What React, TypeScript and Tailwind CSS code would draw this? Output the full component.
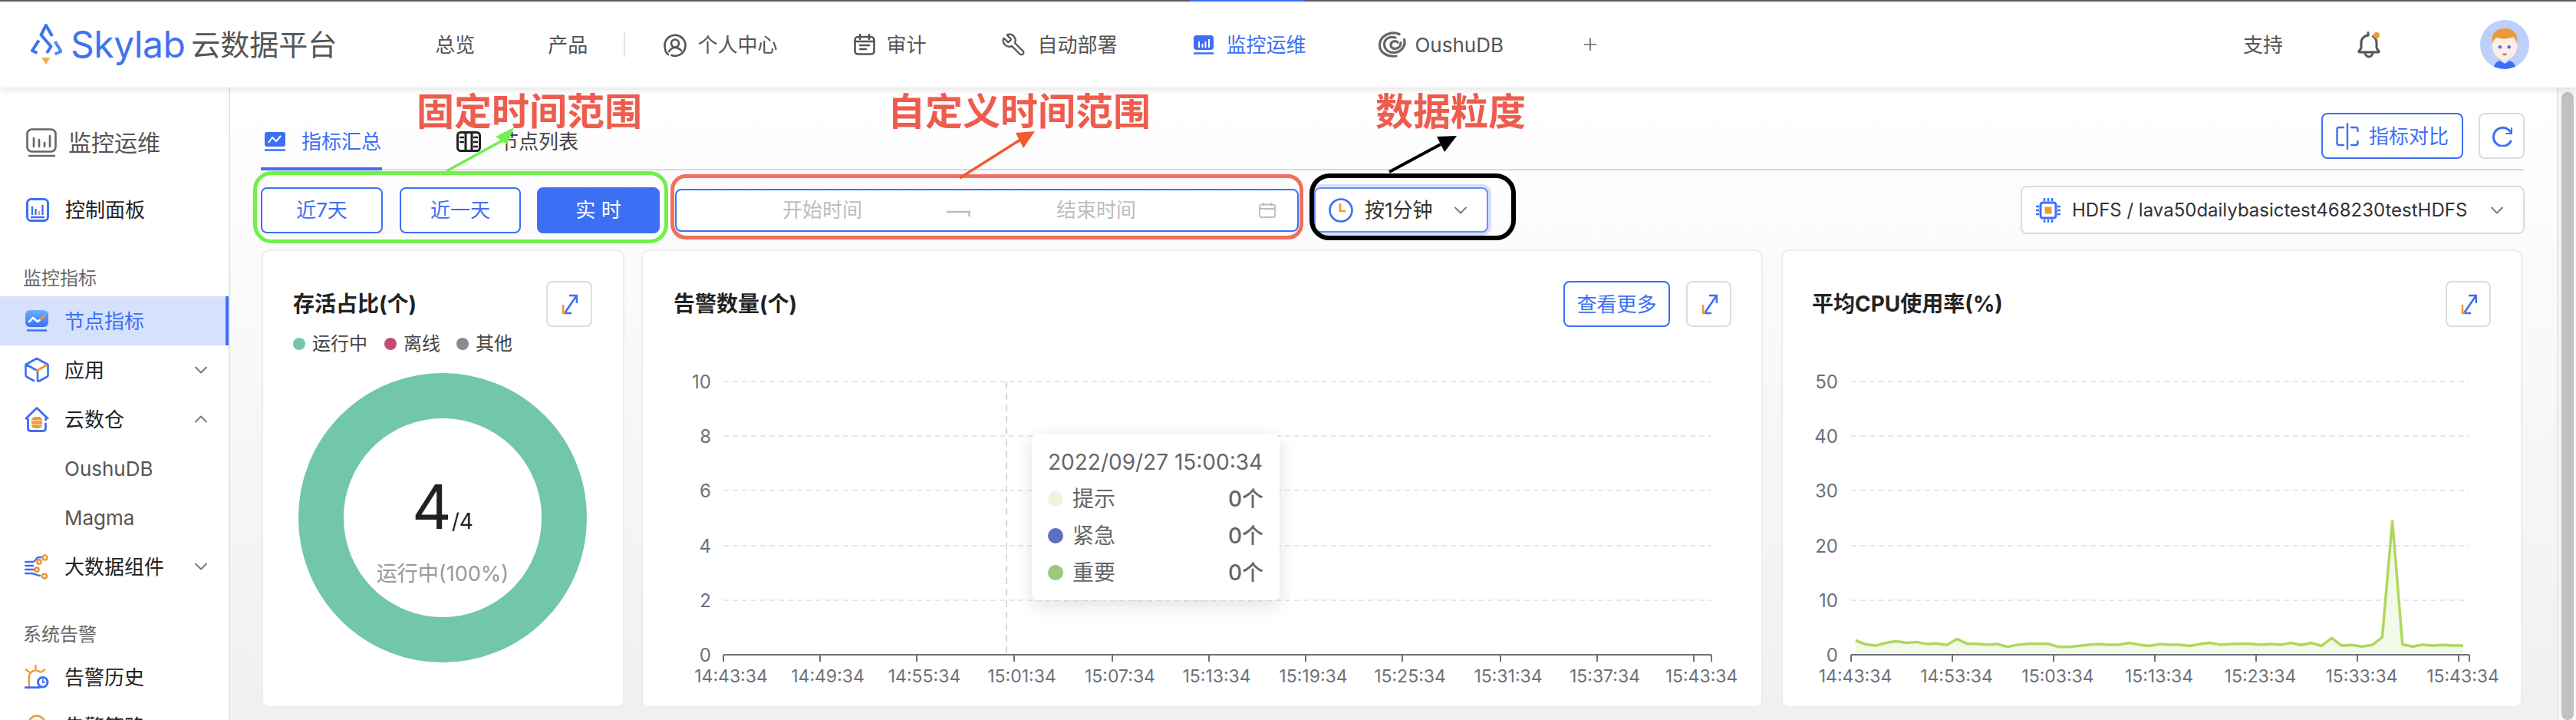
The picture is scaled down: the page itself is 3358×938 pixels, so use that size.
import React from 'react';
import { Wrench, Plus, ChevronDown, ChevronUp } from 'lucide-react';

const cpu = [1305,1318,1322,1313,1307,1313,1310,1317,1315,1320,1300,1316,1316,1319,1317,1326,1319,1316,1316,1316,1326,1326,1323,1319,1317,1319,1319,1313,1319,1323,1317,1319,1319,1323,1317,1313,1319,1317,1316,1316,1319,1317,1319,1313,1320,1313,1323,1297,1322,1320,1325,1320,1295,910,1318,1325,1319,1322,1320,1322,1322];
const cpuPts = cpu.map((z, i) => `${(2419 + i * 13.2).toFixed(1)},${(320 + z / 2.537).toFixed(1)}`);
const gridY = [497, 568, 639, 711, 782];

const LogoMark = () => (
  <svg width="41" height="54" viewBox="0 0 41 54" fill="none" stroke="#3f72f0" strokeWidth="4" strokeLinejoin="round">
    <path d="M28 16 20 2 13.5 14.5 26.5 29.5 21 38" />
    <path d="M10.7 21.5 2 35 8.5 38" />
    <path d="M31.7 23 39.5 36 31.7 39.5" stroke="#4f8df5" />
    <path d="M14 44h11.5L20 53z" fill="#eeb25e" stroke="none" />
  </svg>
);

const UserIcon = () => (
  <svg width="30" height="31" viewBox="0 0 30 31" fill="none" stroke="#555" strokeWidth="2.6" strokeLinecap="round">
    <path d="M6 28C2.500 25.500 1.500 21 1.500 16a13.500 13.500 0 1 1 9 13" />
    <circle cx="15" cy="13.500" r="5" />
    <path d="M7 24c2-3 5-5 8-5s6 1.500 8 4" />
  </svg>
);

const AuditIcon = () => (
  <svg width="28" height="28" viewBox="0 0 28 28" fill="none" stroke="#555" strokeWidth="2.6" strokeLinecap="round">
    <rect x="1.500" y="4" width="25" height="22.500" rx="4" />
    <path d="M8 1v6M20 1v6M1.500 10h25M8 15h12M8 20h8" />
  </svg>
);

const MonitorFill = () => (
  <svg width="28" height="25" viewBox="0 0 28 25" fill="none">
    <rect x="1" y="0" width="26" height="19" rx="4" fill="#3d6ff5" />
    <path d="M8 8v8M12.500 11v5M16.500 8v8M21 5v11" stroke="#fff" strokeWidth="2" />
    <path d="M1 23.500h26" stroke="#3d6ff5" strokeWidth="2.500" />
  </svg>
);

const OushuIcon = () => (
  <svg width="38" height="34" viewBox="0 0 38 34" fill="none" stroke="#666" strokeWidth="3.200" strokeLinecap="round">
    <path d="M28 3.500C18 -1 3 5 2.500 17 2 28 13 33.500 24 32" />
    <path d="M34.500 10.500C37 19 30 28 20 27.500 12 27 8 21 8.500 16 9 9 16 6 23 8" />
    <path d="M26 14c-3-3-9-1-9 3.500s5 6 9 4c3-1.500 4-4 4-7" />
  </svg>
);

const Bell = () => (
  <svg width="34" height="36" viewBox="0 0 34 36" fill="none" stroke="#555" strokeWidth="3" strokeLinecap="round">
    <path d="M15 2.500V6C9 7 6 11 6 16v6c0 2-2 3-3 4.500-.5 1 .5 1.500 1 1.500h24c1 0 1.500-1 1-1.500C28 25 26 24 26 22v-6c0-4-1.500-7-4.500-8.500" />
    <path d="M11 28c0 4 3 6 5 6s5-2 5-6" />
    <circle cx="26" cy="6" r="4" fill="#ec9a3a" stroke="none" />
  </svg>
);

const Avatar = () => (
  <svg width="64" height="64" viewBox="0 0 64 64">
    <clipPath id="avatar-clip"><circle cx="32" cy="32" r="32" /></clipPath>
    <g clipPath="url(#avatar-clip)">
      <rect width="64" height="64" fill="#bcd0fb" />
      <circle cx="16.700" cy="34" r="3" fill="#f0d6c8" />
      <circle cx="47" cy="34" r="3" fill="#f0d6c8" />
      <path d="M18 60c2-5 7-8 14-8s12 3 14 8v4H18z" fill="#3d6ff5" />
      <path d="M26 53l6 4 6-4-2-3h-8z" fill="#d9e4fa" />
      <ellipse cx="32" cy="35" rx="16" ry="17" fill="#fbeee8" />
      <path d="M15.700 29C14 18 21 11 32 11s18 7 16 18c-2-3-3-5-4-7-7 3-17 3-23 1-2 2-4 4-5.300 6z" fill="#ec9a3a" />
      <circle cx="26" cy="35.300" r="2.200" fill="#3d6ff5" />
      <circle cx="37.700" cy="35.300" r="2.200" fill="#3d6ff5" />
      <path d="M29 43.500h6c0 2-1 3-3 3s-3-1-3-3z" fill="#c9847a" />
    </g>
  </svg>
);

const MonitorOutline = () => (
  <svg width="40" height="38" viewBox="0 0 40 38" fill="none" stroke="#666" strokeWidth="2.600" strokeLinecap="round">
    <rect x="1.500" y="1.500" width="37" height="29" rx="6" />
    <path d="M10 13v11M17 15v9M24 19v5M31 10v14" />
    <path d="M4 36h33" strokeWidth="2.400" />
  </svg>
);

const PanelIcon = () => (
  <svg width="30" height="31" viewBox="0 0 30 31" fill="none" strokeWidth="2.400">
    <rect x="1.500" y="1.500" width="27" height="28" rx="5" stroke="#3d6ff5" strokeWidth="3" />
    <path d="M8 11v11M12.500 14v8M21.500 9v13M6 25h18" stroke="#3d6ff5" />
    <path d="M17 17v5" stroke="#ec9a3a" />
  </svg>
);

const NodeIcon = () => (
  <svg width="32" height="28" viewBox="0 0 32 28" fill="none">
    <defs>
      <linearGradient id="node-grad" x1="0" y1="0" x2="0" y2="1">
        <stop offset="0" stopColor="#6fb0fb" />
        <stop offset="1" stopColor="#3d6ff5" />
      </linearGradient>
    </defs>
    <rect x="1" y="0" width="30" height="22" rx="6" fill="url(#node-grad)" />
    <path d="M6 15l5-5 6 5 4-3" stroke="#fff" strokeWidth="2.600" strokeLinecap="round" strokeLinejoin="round" />
    <path d="M21 12l5-5" stroke="#ec9a3a" strokeWidth="2.600" strokeLinecap="round" />
    <path d="M3 26.500h26" stroke="#3d6ff5" strokeWidth="2.400" />
  </svg>
);

const BoxIcon = () => (
  <svg width="32" height="34" viewBox="0 0 32 34" fill="none" strokeWidth="2.600" strokeLinecap="round" strokeLinejoin="round">
    <path d="M12 31l-9-5c-1-.5-1.500-1-1.500-2V10L16 2l14.500 8v14c0 1-.5 1.500-1.500 2l-9 5c-1 .5-2 .5-3 0V18L2 10" stroke="#3d6ff5" />
    <path d="M16 18l12-7" stroke="#ec9a3a" strokeWidth="3" />
  </svg>
);

const HouseIcon = () => (
  <svg width="32" height="33" viewBox="0 0 32 33" fill="none" strokeWidth="2.800" strokeLinecap="round" strokeLinejoin="round">
    <path d="M30 15L16 1.500 2 15l2.500 1v12c0 2.500 1.500 3.500 3.500 3.500h16c2 0 3.500-1 3.500-3.500v-6M27.500 16v1" stroke="#3d6ff5" />
    <rect x="9" y="13" width="14" height="15" rx="5" fill="#ec9a3a" />
    <path d="M9.500 18h13M9.500 23h13" stroke="#f9d7a8" strokeWidth="1.400" />
  </svg>
);

const DataIcon = () => (
  <svg width="32" height="33" viewBox="0 0 32 33" fill="none" strokeWidth="2.400" strokeLinecap="round">
    <path d="M1 10h10c4 0 3-6 8-6h4M1 15h10M1 20h11M1 25h8c5 0 7 3 11 3" stroke="#3d6ff5" />
    <g stroke="#ec9a3a" strokeWidth="2.600">
      <circle cx="26.500" cy="4.500" r="3" />
      <circle cx="19" cy="10" r="2.600" />
      <circle cx="16" cy="20" r="2.600" />
      <circle cx="26" cy="28.500" r="3" />
    </g>
  </svg>
);

const AlarmIcon = () => (
  <svg width="33" height="32" viewBox="0 0 33 32" fill="none" strokeWidth="2.400" strokeLinecap="round">
    <path d="M6 28V16a9 9 0 0 1 15-6.500M15 0v5M2 6l4 3M27 6l-4 3" stroke="#ec9a3a" />
    <path d="M1 30h20" stroke="#3d6ff5" strokeWidth="2.800" />
    <circle cx="24.500" cy="23" r="6.500" fill="#fff" stroke="#3d6ff5" strokeWidth="3" />
    <path d="M24.500 19.500V23h3" stroke="#3d6ff5" strokeWidth="1.800" />
  </svg>
);

const PolicyIcon = () => (
  <svg width="24" height="32" viewBox="0 0 24 32" fill="none">
    <circle cx="12" cy="13" r="10.500" stroke="#ec9a3a" strokeWidth="2.600" />
  </svg>
);

const TabFillIcon = () => (
  <svg width="29" height="25" viewBox="0 0 29 25" fill="none">
    <rect x="1" y="0" width="27" height="19" rx="3" fill="#3d6ff5" />
    <path d="M6 14l5-7 5 5 6-7" stroke="#fff" strokeWidth="2" strokeLinejoin="round" />
    <path d="M1 23.500h27" stroke="#3d6ff5" strokeWidth="2.500" />
  </svg>
);

const TabListIcon = () => (
  <svg width="32" height="27" viewBox="0 0 32 27" fill="none" stroke="#222" strokeWidth="3">
    <rect x="1.500" y="1.500" width="29" height="24" rx="4" />
    <path d="M12 1.500v24M20 1.500v24" />
    <path d="M4 8h6M4 14h6M22 8h6M22 14h6M22 20h6" strokeWidth="2.400" />
  </svg>
);

const ExpandIcon = () => (
  <svg width="22" height="27" viewBox="0 0 22 27" fill="none" strokeWidth="2.600">
    <path d="M5 25L20 3M11 2h10v10M5 25h9" stroke="#3d6ff5" />
    <path d="M3 14v11h3" stroke="#ec9a3a" />
  </svg>
);

const ExpandButton = ({ wide }: { wide?: boolean }) => (
  <button className={`flex h-[60px] shrink-0 items-center justify-center rounded-[8px] border-2 border-[#dcdce0] bg-white ${wide ? 'w-[60px]' : 'w-[59px]'}`}>
    <ExpandIcon />
  </button>
);

const CompareIcon = () => (
  <svg width="30" height="35" viewBox="0 0 30 35" fill="none" stroke="#3d6ff5" strokeWidth="2.400" strokeLinecap="round">
    <path d="M15 1v33" />
    <path d="M10 6H4C2.500 6 1.500 7 1.500 8.500v18C1.500 28 2.500 29 4 29h6" />
    <path d="M20 6h6c1.500 0 2.500 1 2.500 2.500V11M28.500 24v2.500c0 1.500-1 2.500-2.500 2.500h-6" />
  </svg>
);

const RefreshIcon = () => (
  <svg width="28" height="27" viewBox="0 0 28 27" fill="none" stroke="#3d6ff5" strokeWidth="3" strokeLinecap="round">
    <path d="M26 20a12 12 0 1 1-3-15l3 3" />
    <path d="M27 3v7h-7" strokeWidth="2" />
  </svg>
);

const ChipIcon = () => (
  <svg width="32" height="32" viewBox="0 0 32 32" fill="none" stroke="#3d6ff5">
    <rect x="6" y="6" width="20" height="20" rx="3" strokeWidth="3" />
    <rect x="11.500" y="11.500" width="9" height="9" fill="#ec9a3a" stroke="none" />
    <path d="M11 0v4M16 0v4M21 0v4M11 28v4M16 28v4M21 28v4M0 11h4M0 16h4M0 21h4M28 11h4M28 16h4M28 21h4" strokeWidth="2.400" />
  </svg>
);

const ClockIcon = () => (
  <svg width="32" height="32" viewBox="0 0 32 32" fill="none">
    <circle cx="16" cy="16" r="14.500" stroke="#3d6ff5" strokeWidth="2.600" />
    <path d="M15 7v10h7" stroke="#ec9a3a" strokeWidth="2.600" />
  </svg>
);

const CalendarIcon = () => (
  <svg width="22" height="20" viewBox="0 0 22 20" fill="none" stroke="#bdbdbd" strokeWidth="1.800">
    <rect x="1" y="2.500" width="20" height="16.500" rx="2" />
    <path d="M1 8h20M6 0v4M16 0v4" />
  </svg>
);

const NavItem = ({ icon, label, className, active }: { icon?: React.ReactNode; label: string; className?: string; active?: boolean }) => (
  <div className={`relative flex items-center text-[26px] ${active ? 'text-[#3d6ff5]' : 'text-[#555]'} ${className ?? ''}`}>
    {icon}
    <span>{label}</span>
  </div>
);

const SideRow = ({
  icon,
  label,
  open,
  active,
  sub,
  cls,
}: {
  icon?: React.ReactNode;
  label: string;
  open?: boolean;
  active?: boolean;
  sub?: boolean;
  cls?: string;
}) => (
  <div
    className={`flex h-[64px] shrink-0 items-center pl-[32px] text-[26px] ${
      active ? 'border-r-4 border-[#3d6ff5] bg-[#d6e2fc] text-[#3d6ff5]' : sub ? 'text-[#555]' : 'text-[#222]'
    } ${cls ?? ''}`}
  >
    <span className="flex w-[32px] shrink-0 justify-center">{icon}</span>
    <span className="ml-[20px]">{label}</span>
    {open === true && <ChevronUp className="ml-auto mr-[22px] text-[#777]" size={28} strokeWidth={1.600} />}
    {open === false && <ChevronDown className="ml-auto mr-[22px] text-[#777]" size={28} strokeWidth={1.600} />}
  </div>
);

const FilterButton = ({ label, solid, className }: { label: string; solid?: boolean; className: string }) => (
  <button
    className={`flex h-[60px] items-center justify-center rounded-[8px] border-2 border-[#3d6ff5] text-[26px] ${
      solid ? 'bg-[#3d6ff5] text-white' : 'bg-white text-[#3d6ff5]'
    } ${className}`}
  >
    {label}
  </button>
);

const Legend = ({ color, label, className }: { color: string; label: string; className?: string }) => (
  <div className={`flex items-center text-[24px] text-[#444] ${className ?? ''}`}>
    <span className={`h-[16px] w-[16px] rounded-full ${color}`} />
    <span className="ml-[9px]">{label}</span>
  </div>
);

const Chart = ({
  x,
  w,
  yLabels,
  yRight,
  axis,
  ticks,
  labels,
  offset,
  children,
}: {
  x: number;
  w: number;
  yLabels: string[];
  yRight: number;
  axis: [number, number];
  ticks: number[];
  labels: string[];
  offset: number;
  children?: React.ReactNode;
}) => (
  <svg className="block" width={w} height={430} viewBox={`${x} 480 ${w} 430`} fill="none">
    {gridY.map((y) => (
      <path key={y} d={`M${axis[0]} ${y}H${axis[1]}`} stroke="#e2e7f3" strokeWidth="2" strokeDasharray="7 5" />
    ))}
    {children}
    <path d={`M${axis[0]} 853H${axis[1]}`} stroke="#6e7079" strokeWidth="2" />
    {ticks.map((t) => (
      <path key={t} d={`M${t} 853v9`} stroke="#6e7079" strokeWidth="2" />
    ))}
    {yLabels.map((l, i) => (
      <text key={l} x={yRight} y={[497, 568, 639, 711, 782, 853][i]} dy="9" textAnchor="end" fontSize="24" fill="#6e7079">
        {l}
      </text>
    ))}
    {labels.map((l, i) => (
      <text key={l} x={ticks[i] + offset} y="889" textAnchor="middle" fontSize="23" fill="#6e7079">
        {l}
      </text>
    ))}
  </svg>
);

const TipRow = ({ color, label }: { color: string; label: string }) => (
  <div className="flex h-[48px] items-center text-[28px] text-[#666]">
    <span className={`h-[20px] w-[20px] rounded-full ${color}`} />
    <span className="ml-[12px]">{label}</span>
    <span className="ml-auto font-medium">0个</span>
  </div>
);

const Arrow = ({ from, to, head, color, width }: { from: string; to: string; head: string; color: string; width: number }) => (
  <g>
    <path d={`M${from}L${to}`} stroke={color} strokeWidth={width} />
    <polygon points={head} fill={color} />
  </g>
);

export default function App() {
  return (
    <div className="relative h-[938px] w-[3358px] overflow-hidden bg-white font-[family-name:Inter,'Noto_Sans_CJK_SC',sans-serif]">
      {/* top nav */}
      <header className="relative z-10 flex h-[114px] items-center border-t-2 border-[#5c5c5c] bg-white shadow-[0_2px_10px_rgba(0,0,0,0.12)]">
        <div className="ml-[40px] flex items-center">
          <LogoMark />
          <span className="ml-[11px] text-[48px] leading-none tracking-[-0.5px] text-[#3f72f0]">Skylab</span>
          <span className="ml-[8px] text-[38px] leading-none text-[#555]">云数据平台</span>
        </div>
        <NavItem label="总览" className="ml-[128px]" />
        <NavItem label="产品" className="ml-[95px]" />
        <div className="ml-[47px] h-[32px] w-[2px] bg-[#e2e2e2]" />
        <NavItem icon={<UserIcon />} label="个人中心" className="ml-[50px] gap-[14px]" />
        <NavItem icon={<AuditIcon />} label="审计" className="ml-[100px] gap-[14px]" />
        <NavItem icon={<Wrench size={32} strokeWidth={1.700} className="-scale-x-100" />} label="自动部署" className="ml-[98px] gap-[15px]" />
        <NavItem
          active
          icon={
            <>
              <span className="absolute left-[-4px] top-[-43px] h-[6px] w-[150px] bg-[#3d6ff5]" />
              <MonitorFill />
            </>
          }
          label="监控运维"
          className="ml-[99px] gap-[15px]"
        />
        <NavItem icon={<OushuIcon />} label="OushuDB" className="ml-[94px] gap-[10px]" />
        <Plus className="ml-[100px] text-[#666]" size={26} strokeWidth={1.500} />
        <NavItem label="支持" className="ml-[838px]" />
        <div className="ml-[96px]">
          <Bell />
        </div>
        <div className="ml-[127px]">
          <Avatar />
        </div>
      </header>

      <div className="flex h-[824px]">
        {/* side menu */}
        <aside className="flex w-[300px] shrink-0 flex-col border-r-2 border-[#e4e4e8] bg-white pt-[40px]">
          <div className="flex h-[64px] shrink-0 items-center pl-[34px] text-[30px] text-[#555]">
            <MonitorOutline />
            <span className="ml-[15px]">监控运维</span>
          </div>
          <SideRow icon={<PanelIcon />} label="控制面板" cls="mt-[23px] !pl-[33px]" />
          <div className="ml-[30px] mt-[40px] mb-[5px] h-[36px] text-[24px] leading-[36px] text-[#666]">监控指标</div>
          <SideRow active icon={<NodeIcon />} label="节点指标" />
          <SideRow icon={<BoxIcon />} label="应用" open={false} />
          <SideRow icon={<HouseIcon />} label="云数仓" open />
          <SideRow sub label="OushuDB" />
          <SideRow sub label="Magma" />
          <SideRow icon={<DataIcon />} label="大数据组件" open={false} />
          <div className="ml-[30px] mt-[39px] mb-[5px] h-[36px] shrink-0 text-[24px] leading-[36px] text-[#666]">系统告警</div>
          <SideRow icon={<AlarmIcon />} label="告警历史" />
          <SideRow icon={<PolicyIcon />} label="告警策略" />
        </aside>

        {/* main */}
        <main className="flex w-[3033px] shrink-0 flex-col bg-gradient-to-b from-white to-[#f0f0f0] pl-[40px] pr-[42px]">
          <div className="flex h-[108px] shrink-0 border-b-2 border-[#d9d9e0]">
            <div className="flex h-[108px] w-[158px] items-start gap-[20px] border-b-4 border-[#3d6ff5] pl-[4px] pt-[58px] text-[26px] leading-[26px] text-[#3d6ff5]">
              <TabFillIcon />
              <span>指标汇总</span>
            </div>
            <div className="ml-[97px] flex items-start gap-[23px] pt-[57px] text-[26px] leading-[28px] text-[#444]">
              <TabListIcon />
              <span>节点列表</span>
            </div>
            <div className="ml-auto flex gap-[20px] pt-[33px]">
              <button className="flex h-[60px] w-[185px] items-center justify-center gap-[13px] rounded-[8px] border-2 border-[#3d6ff5] bg-white text-[26px] text-[#3d6ff5]">
                <CompareIcon />
                <span>指标对比</span>
              </button>
              <button className="flex h-[60px] w-[60px] items-center justify-center rounded-[8px] border-2 border-[#dcdce0] bg-white">
                <RefreshIcon />
              </button>
            </div>
          </div>

          <div className="flex h-[103px] shrink-0 items-center">
            <FilterButton label="近7天" className="w-[159px]" />
            <FilterButton label="近一天" className="ml-[22px] w-[158px]" />
            <FilterButton solid label="实 时" className="ml-[21px] w-[160px]" />
            <div className="ml-[20px] flex h-[56px] w-[813px] items-center rounded-[8px] border-2 border-[#3d6ff5] bg-white text-[26px] text-[#bdbdbd]">
              <span className="ml-[138px]">开始时间</span>
              <svg className="ml-[110px] mt-[8px]" width="32" height="10" viewBox="0 0 32 10" fill="none" stroke="#bdbdbd" strokeWidth="2.400">
                <path d="M0 3h30l-1 6" />
              </svg>
              <span className="ml-[111px]">结束时间</span>
              <span className="ml-[160px]">
                <CalendarIcon />
              </span>
            </div>
            <div className="ml-[20px] flex h-[59px] w-[227px] items-center rounded-[8px] border-2 border-[#6690f5] bg-white pl-[17px] text-[26px] text-[#333] shadow-[0_0_0_4px_#d6e0fb]">
              <ClockIcon />
              <span className="ml-[15px]">按1分钟</span>
              <ChevronDown className="ml-auto mr-[20px] text-[#777]" size={28} strokeWidth={1.600} />
            </div>
            <div className="ml-auto flex h-[63px] w-[657px] items-center rounded-[8px] border-2 border-[#dcdce0] bg-white pl-[18px] text-[24px] text-[#333]">
              <ChipIcon />
              <span className="ml-[15px] whitespace-nowrap">HDFS / lava50dailybasictest468230testHDFS</span>
              <ChevronDown className="ml-auto mr-[20px] text-[#777]" size={28} strokeWidth={1.600} />
            </div>
          </div>

          <div className="flex h-[597px] shrink-0 pl-[1px]">
            <section className="flex w-[473px] shrink-0 flex-col rounded-[10px] border-2 border-[#ededed] bg-white pl-[39px] pr-[40px] pt-[39px]">
              <div className="flex h-[60px] items-center justify-between">
                <h3 className="text-[28px] font-bold text-[#222]">存活占比(个)</h3>
                <ExpandButton wide />
              </div>
              <div className="mt-[10px] flex h-[24px]">
                <Legend color="bg-[#72c6ac]" label="运行中" />
                <Legend color="bg-[#c64b70]" label="离线" className="ml-[22px]" />
                <Legend color="bg-[#8a8b90]" label="其他" className="ml-[21px]" />
              </div>
              <div className="-mx-[10px] mt-[26px] flex justify-center">
                <div className="flex h-[377px] w-[376px] flex-col items-center rounded-full border-[59px] border-[#72c6ac] pt-[70px]">
                  <div className="flex items-baseline text-[#222]">
                    <span className="text-[80px] leading-[90px]">4</span>
                    <span className="text-[28px]">/4</span>
                  </div>
                  <span className="mt-[25px] text-[27px] leading-[36px] text-[#999]">运行中(100%)</span>
                </div>
              </div>
            </section>

            <section className="relative ml-[22px] flex w-[1462px] shrink-0 flex-col rounded-[10px] border-2 border-[#ededed] bg-white pt-[39px]">
              <div className="flex h-[60px] items-center pl-[40px] pr-[39px]">
                <h3 className="text-[28px] font-bold text-[#222]">告警数量(个)</h3>
                <button className="ml-auto mr-[21px] flex h-[60px] w-[139px] items-center justify-center rounded-[8px] border-2 border-[#3d6ff5] bg-white text-[26px] text-[#3d6ff5]">
                  查看更多
                </button>
                <ExpandButton />
              </div>
              <div className="mt-[54px]">
                <Chart
                  x={838}
                  w={1458}
                  yLabels={['10', '8', '6', '4', '2', '0']}
                  yRight={927}
                  axis={[943, 2231]}
                  ticks={[943, 1069, 1195, 1322, 1450, 1576, 1702, 1828, 1956, 2082, 2208, 2231]}
                  labels={['14:43:34', '14:49:34', '14:55:34', '15:01:34', '15:07:34', '15:13:34', '15:19:34', '15:25:34', '15:31:34', '15:37:34', '15:43:34']}
                  offset={10}
                >
                  <path d="M1312 497V853" stroke="#c9c9cf" strokeWidth="1.500" strokeDasharray="9 6" />
                </Chart>
              </div>
              {/* hover tooltip on the chart */}
              <div className="absolute left-[507px] top-[239px] h-[216px] w-[323px] rounded-[8px] bg-white px-[21px] pt-[18px] shadow-[0_6px_24px_rgba(0,0,0,0.13)]">
                <div className="mb-[6px] h-[36px] whitespace-nowrap text-[28px] leading-[36px] text-[#666]">2022/09/27 15:00:34</div>
                <TipRow color="bg-[#f3f3dd]" label="提示" />
                <TipRow color="bg-[#5a70c3]" label="紧急" />
                <TipRow color="bg-[#9bc879]" label="重要" />
              </div>
            </section>

            <section className="ml-[24px] flex w-[966px] shrink-0 flex-col rounded-[10px] border-2 border-[#ededed] bg-white pt-[39px]">
              <div className="flex h-[60px] items-center pl-[38px] pr-[39px]">
                <h3 className="text-[28px] font-bold text-[#222]">平均CPU使用率(%)</h3>
                <div className="ml-auto">
                  <ExpandButton />
                </div>
              </div>
              <div className="mt-[54px]">
                <Chart
                  x={2324}
                  w={962}
                  yLabels={['50', '40', '30', '20', '10', '0']}
                  yRight={2396}
                  axis={[2413, 3219]}
                  ticks={[2413, 2545, 2677, 2809, 2941, 3073, 3205, 3219]}
                  labels={['14:43:34', '14:53:34', '15:03:34', '15:13:34', '15:23:34', '15:33:34', '15:43:34']}
                  offset={5.5}
                >
                  <polygon points={`2419,853 ${cpuPts.join(' ')} 3211,853`} fill="#f3f9e8" />
                  <polyline points={cpuPts.join(' ')} stroke="#afd75e" strokeWidth="3.500" strokeLinejoin="round" />
                </Chart>
              </div>
            </section>
          </div>
        </main>

        {/* scrollbar */}
        <div className="flex-1 border-l-2 border-[#e6e6e6] bg-[#f7f7f7] pl-[4px] pt-[6px]">
          <div className="h-full w-[16px] rounded-full bg-[#c1c1c1]" />
        </div>
      </div>

      {/* red/green/black notes drawn on top of the screenshot */}
      <div className="absolute left-[330px] top-[223px] z-20 h-[94px] w-[541px] rounded-[24px] border-[5px] border-[#70f04a]" />
      <div className="absolute left-[874px] top-[227px] z-20 h-[85px] w-[825px] rounded-[20px] border-[5px] border-[#f0705c]" />
      <div className="absolute left-[1707px] top-[226px] z-20 h-[87px] w-[269px] rounded-[26px] border-[6px] border-black" />
      <span className="absolute left-[543px] top-[116px] z-20 text-[49px] font-bold leading-[60px] text-[#ee5c4e]">固定时间范围</span>
      <span className="absolute left-[1157px] top-[116px] z-20 text-[49px] font-bold leading-[60px] text-[#ee5c4e]">自定义时间范围</span>
      <span className="absolute left-[1793px] top-[116px] z-20 text-[49px] font-bold leading-[60px] text-[#ee5c4e]">数据粒度</span>
      <svg className="absolute left-0 top-0 z-20" width="3358" height="320" viewBox="0 0 3358 320" fill="none">
        <Arrow from="582,223" to="655,183" head="670,166 646,178 661,188" color="#70f04a" width={3.500} />
        <Arrow from="1251,232" to="1330,182" head="1349,171 1324,173 1334,193" color="#ef5a2f" width={3.500} />
        <Arrow from="1811,224" to="1878,188" head="1899,177 1873,178 1883,198" color="#000" width={4} />
      </svg>
    </div>
  );
}
